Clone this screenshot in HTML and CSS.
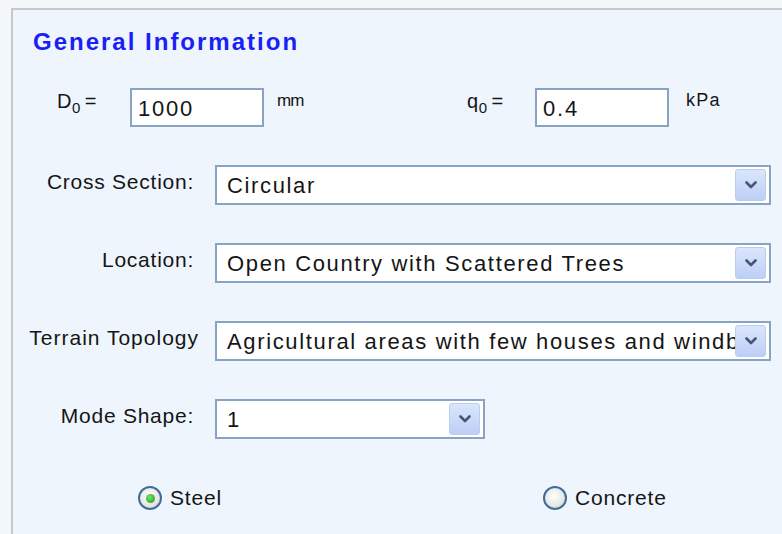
FILE: index.html
```html
<!DOCTYPE html>
<html lang="en">
<head>
<meta charset="utf-8">
<title>General Information</title>
<link rel="stylesheet" href="styles.css">
</head>
<body>
<div class="page">
  <section class="panel">
    <h2 class="panel-title">General Information</h2>

    <div class="qty-row">
      <div class="qty qty--d">
        <span class="qty-label">D<sub>0</sub>=</span>
        <div class="textbox">1000</div>
        <span class="unit unit--mm">mm</span>
      </div>
      <div class="qty qty--q">
        <span class="qty-label">q<sub>0</sub>=</span>
        <div class="textbox">0.4</div>
        <span class="unit unit--kpa">kPa</span>
      </div>
    </div>

    <div class="form-grid">
      <div class="field-label">Cross Section:</div>
      <div class="dropdown">
        <span class="dropdown-value">Circular</span>
        <span class="dropdown-btn"><svg viewBox="0 0 12 8" width="12" height="8"><path d="M1.5 1.5 L6 6 L10.5 1.5" fill="none" stroke="#46567a" stroke-width="2.6" stroke-linecap="round" stroke-linejoin="round"/></svg></span>
      </div>

      <div class="field-label">Location:</div>
      <div class="dropdown">
        <span class="dropdown-value">Open Country with Scattered Trees</span>
        <span class="dropdown-btn"><svg viewBox="0 0 12 8" width="12" height="8"><path d="M1.5 1.5 L6 6 L10.5 1.5" fill="none" stroke="#46567a" stroke-width="2.6" stroke-linecap="round" stroke-linejoin="round"/></svg></span>
      </div>

      <div class="field-label field-label--wide">Terrain Topology</div>
      <div class="dropdown">
        <span class="dropdown-value">Agricultural areas with few houses and windbreaks</span>
        <span class="dropdown-btn"><svg viewBox="0 0 12 8" width="12" height="8"><path d="M1.5 1.5 L6 6 L10.5 1.5" fill="none" stroke="#46567a" stroke-width="2.6" stroke-linecap="round" stroke-linejoin="round"/></svg></span>
      </div>

      <div class="field-label">Mode Shape:</div>
      <div class="dropdown dropdown--short">
        <span class="dropdown-value">1</span>
        <span class="dropdown-btn"><svg viewBox="0 0 12 8" width="12" height="8"><path d="M1.5 1.5 L6 6 L10.5 1.5" fill="none" stroke="#46567a" stroke-width="2.6" stroke-linecap="round" stroke-linejoin="round"/></svg></span>
      </div>
    </div>

    <div class="radio-row">
      <label class="radio radio--steel"><span class="radio-dot is-checked"></span>Steel</label>
      <label class="radio radio--concrete"><span class="radio-dot"></span>Concrete</label>
    </div>
  </section>
</div>
</body>
</html>
```

FILE: styles.css
```css
html, body {
  margin: 0;
  padding: 0;
  background: #f5f8fb;
}

body {
  font-family: "Liberation Sans", Arial, sans-serif;
  color: #151515;
  width: 782px;
  height: 534px;
  overflow: hidden;
}

.page {
  padding: 8px 0 0 11px;
}

.panel {
  background: #eef5fc;
  border-top: 2px solid #c7c9cb;
  border-left: 2px solid #c7c9cb;
  padding: 18px 0 0 20px;
  height: 526px;
  box-sizing: border-box;
}

.panel-title {
  margin: 0;
  font-size: 24px;
  line-height: 28px;
  font-weight: bold;
  letter-spacing: 2px;
  color: #1a1ff5;
}

/* D0 / q0 quantity inputs */
.qty-row {
  display: flex;
  margin-top: 32px;
  padding-left: 24px;
}

.qty {
  display: flex;
  align-items: flex-start;
}

.qty--d { width: 410px; }

.qty-label {
  font-size: 20px;
  letter-spacing: 0.5px;
  line-height: 24px;
  margin-top: 1px;
  white-space: nowrap;
}

.qty-label sub {
  font-size: 15px;
  line-height: 0;
  vertical-align: -5px;
  margin-right: 4px;
}

.qty--d .qty-label { width: 73px; }
.qty--q .qty-label { width: 68px; }

.textbox {
  box-sizing: border-box;
  width: 134px;
  height: 39px;
  border: 2px solid #88a4c2;
  background: #fff;
  font-size: 22px;
  letter-spacing: 1.8px;
  line-height: 37px;
  padding-left: 6px;
}

.unit {
  font-size: 18px;
  line-height: 22px;
  margin-top: 1px;
}

.unit--mm {
  margin-left: 13px;
  letter-spacing: -1px;
  font-size: 17px;
  margin-top: 2px;
}

.unit--kpa {
  margin-left: 17px;
  letter-spacing: 1.2px;
}

/* label / dropdown pairs */
.form-grid {
  display: grid;
  grid-template-columns: 169px 556px;
  column-gap: 13px;
  row-gap: 38px;
  margin-top: 38px;
  align-items: center;
}

.field-label {
  display: flex;
  justify-content: flex-end;
  white-space: nowrap;
  font-size: 21px;
  letter-spacing: 0.75px;
  padding-right: 8px;
  margin-top: -6px;
}

.field-label--wide {
  padding-right: 3px;
  letter-spacing: 1px;
}

.dropdown {
  box-sizing: border-box;
  height: 40px;
  border: 2px solid #88a4c2;
  background: #fff;
  display: flex;
  align-items: center;
  padding: 0 3px 0 10px;
  overflow: hidden;
}

.dropdown--short {
  width: 270px;
}

.dropdown-value {
  flex: 1;
  min-width: 0;
  white-space: nowrap;
  overflow: hidden;
  font-size: 22px;
  letter-spacing: 1.65px;
  padding-top: 2px;
}

.dropdown-btn {
  flex: none;
  width: 31px;
  height: 32px;
  box-sizing: border-box;
  border: 1px solid #b9cdef;
  border-radius: 3px;
  background: linear-gradient(#dbe6fc, #bccff6);
  display: flex;
  align-items: center;
  justify-content: center;
}

/* material radio buttons */
.radio-row {
  display: flex;
  margin-top: 47px;
  padding-left: 105px;
}

.radio {
  display: flex;
  align-items: center;
  font-size: 21px;
  letter-spacing: 0.8px;
}

.radio--steel { width: 405px; }

.radio-dot {
  box-sizing: border-box;
  width: 24px;
  height: 24px;
  border-radius: 50%;
  border: 2px solid #3e6d9c;
  background: radial-gradient(circle at 45% 40%, #ffffff, #e6e6e3 60%, #cfcfcc);
  margin-right: 8px;
  position: relative;
}

.radio-dot.is-checked::after {
  content: "";
  position: absolute;
  left: 50%;
  top: 50%;
  width: 9px;
  height: 9px;
  margin: -4.5px 0 0 -4.5px;
  border-radius: 50%;
  background: radial-gradient(circle at 40% 35%, #6fe36f, #1b9a1b);
}
```
